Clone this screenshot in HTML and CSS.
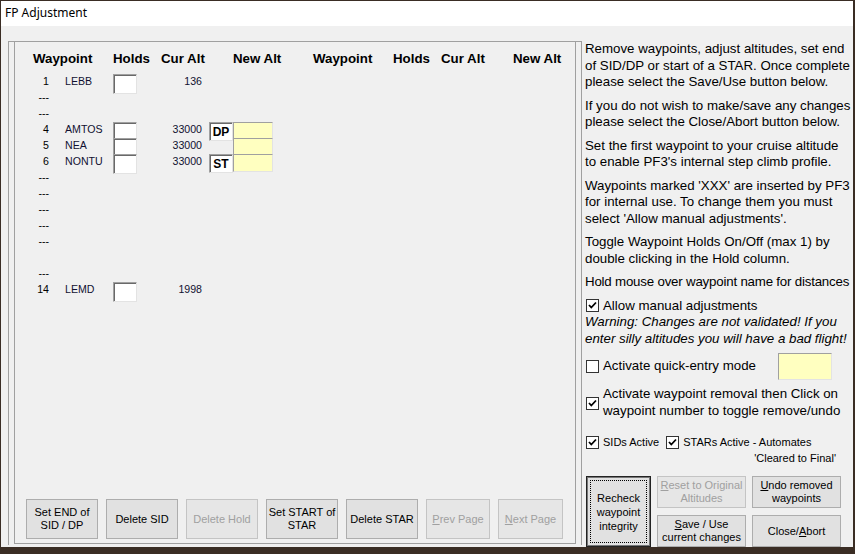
FILE: index.html
```html
<!DOCTYPE html>
<html lang="en">
<head>
    <meta charset="UTF-8">
    <title>FP Adjustment</title>
    <link rel="stylesheet" href="styles.css">
</head>
<body>
    <div class="window">
        <div class="titlebar">FP Adjustment</div>
        <div class="client">
            <div class="frame">
                <div class="inner">
                    <div class="heads">
                        <span class="h-wp">Waypoint</span><span class="h-hold">Holds</span><span class="h-cur">Cur Alt</span><span class="h-new">New Alt</span>
                        <span class="h-wp">Waypoint</span><span class="h-hold">Holds</span><span class="h-cur">Cur Alt</span><span class="h-new">New Alt</span>
                    </div>
                    <div class="rows">
                        <div class="row"><span class="num">1</span><span class="name">LEBB</span><span class="box"></span><span class="cur">136</span></div>
                        <div class="row"><span class="num">---</span></div>
                        <div class="row"><span class="num">---</span></div>
                        <div class="row"><span class="num">4</span><span class="name">AMTOS</span><span class="box"></span><span class="cur">33000</span><span class="newalt"><span class="tag">DP</span><span class="yel"></span></span></div>
                        <div class="row"><span class="num">5</span><span class="name">NEA</span><span class="box"></span><span class="cur">33000</span><span class="newalt"><span class="tag blank"></span><span class="yel"></span></span></div>
                        <div class="row"><span class="num">6</span><span class="name">NONTU</span><span class="box"></span><span class="cur">33000</span><span class="newalt"><span class="tag">ST</span><span class="yel"></span></span></div>
                        <div class="row"><span class="num">---</span></div>
                        <div class="row"><span class="num">---</span></div>
                        <div class="row"><span class="num">---</span></div>
                        <div class="row"><span class="num">---</span></div>
                        <div class="row"><span class="num">---</span></div>
                        <div class="row"><span class="num"></span></div>
                        <div class="row"><span class="num">---</span></div>
                        <div class="row"><span class="num">14</span><span class="name">LEMD</span><span class="box"></span><span class="cur">1998</span></div>
                    </div>
                    <div class="btnbar">
                        <div class="btn">Set END of<br>SID / DP</div>
                        <div class="btn">Delete SID</div>
                        <div class="btn off">Delete Hold</div>
                        <div class="btn">Set START of<br>STAR</div>
                        <div class="btn">Delete STAR</div>
                        <div class="btn off narrow"><span><u>P</u>rev Page</span></div>
                        <div class="btn off narrow2"><span><u>N</u>ext Page</span></div>
                    </div>
                </div>
            </div>

            <div class="side">
                <p>Remove waypoints, adjust altitudes, set end<br>of SID/DP or start of a STAR. Once complete<br>please select the Save/Use button below.</p>
                <p>If you do not wish to make/save any changes<br>please select the Close/Abort button below.</p>
                <p>Set the first waypoint to your cruise altitude<br>to enable PF3's internal step climb profile.</p>
                <p>Waypoints marked 'XXX' are inserted by PF3<br>for internal use. To change them you must<br>select 'Allow manual adjustments'.</p>
                <p>Toggle Waypoint Holds On/Off (max 1) by<br>double clicking in the Hold column.</p>
                <p class="tight">Hold mouse over waypoint name for distances</p>
                <div class="check">
                    <span class="cb on"><svg width="11" height="11" viewBox="0 0 11 11"><path d="M2 5 L4.3 7.5 L9 2.5" fill="none" stroke="#000" stroke-width="1.8"/></svg></span>
                    <span>Allow manual adjustments</span>
                </div>
                <div class="warn">Warning: Changes are not validated! If you<br>enter silly altitudes you will have a bad flight!</div>
                <div class="check quick">
                    <span class="cb"></span>
                    <span>Activate quick-entry mode</span>
                    <span class="qbox"></span>
                </div>
                <div class="check removal">
                    <span class="cb on"><svg width="11" height="11" viewBox="0 0 11 11"><path d="M2 5 L4.3 7.5 L9 2.5" fill="none" stroke="#000" stroke-width="1.8"/></svg></span>
                    <span>Activate waypoint removal then Click on<br>waypoint number to toggle remove/undo</span>
                </div>
                <div class="check small">
                    <span class="cb on"><svg width="11" height="11" viewBox="0 0 11 11"><path d="M2 5 L4.3 7.5 L9 2.5" fill="none" stroke="#000" stroke-width="1.8"/></svg></span>
                    <span>SIDs Active</span>
                    <span class="cb on second"><svg width="11" height="11" viewBox="0 0 11 11"><path d="M2 5 L4.3 7.5 L9 2.5" fill="none" stroke="#000" stroke-width="1.8"/></svg></span>
                    <span>STARs Active - Automates</span>
                </div>
                <div class="cleared">'Cleared to Final'</div>

                <div class="actions">
                    <div class="btn default"><span class="focus">Recheck<br>waypoint<br>integrity</span></div>
                    <div class="btn off"><span><u>R</u>eset to Original<br>Altitudes</span></div>
                    <div class="btn"><span><u>U</u>ndo removed<br>waypoints</span></div>
                    <div class="btn"><span><u>S</u>ave / Use<br>current changes</span></div>
                    <div class="btn">Close/<u>A</u>bort</div>
                </div>
            </div>
        </div>
    </div>
</body>
</html>
```

FILE: styles.css
```css
body {
    margin: 0;
    background: #3a2d24;
    font-family: "Liberation Sans", Arial, sans-serif;
}

.window {
    width: 852px;
    height: 546px;
    margin: 1px 0 0 1px;
    background: #f0f0f0;
}

.titlebar {
    height: 25px;
    line-height: 24px;
    padding-left: 4px;
    background: #fff;
    font-family: "Noto Sans", sans-serif;
    font-size: 12px;
    color: #000;
}

.client {
    display: flex;
    height: 521px;
}

/* left group with the waypoint table */
.frame {
    width: 572px;
    height: 503px;
    margin: 15px 0 0 7px;
    border: 1px solid #a0a0a0;
    border-bottom: none;
}

.inner {
    display: flex;
    flex-direction: column;
    height: 502px;
    margin: 0 5px 0 5px;
    padding: 8px 0 4px 11px;
    box-sizing: border-box;
    border-left: 1px solid #a0a0a0;
    border-right: 1px solid #a0a0a0;
    border-bottom: 1px solid #a0a0a0;
}

.heads {
    display: flex;
    padding-left: 7px;
    height: 16px;
    line-height: 17px;
    font-size: 13.3px;
    font-weight: bold;
    color: #000;
    white-space: nowrap;
}

.heads span {
    flex-shrink: 0;
}

.h-wp { width: 80px; }
.h-hold { width: 48px; }
.h-cur { width: 72px; }
.h-new { width: 80px; }

.rows {
    margin-top: 7px;
    padding-left: 7px;
    font-size: 10.6px;
    color: #101030;
}

.row {
    display: flex;
    align-items: flex-start;
    height: 16px;
    line-height: 16px;
}

.num {
    width: 16px;
    text-align: right;
    color: #000;
}

.name {
    width: 48px;
    margin-left: 16px;
}

.box {
    width: 24px;
    height: 20px;
    margin-top: 1px;
    box-sizing: border-box;
    background: #fff;
    border: 1px solid;
    border-color: #a0a0a0 #e3e3e3 #e3e3e3 #a0a0a0;
    box-shadow: inset 1px 1px #696969;
}

.cur {
    width: 65px;
    text-align: right;
}

.newalt {
    display: flex;
    margin-left: 7px;
    margin-top: 1px;
}

.tag {
    width: 24px;
    height: 19px;
    box-sizing: border-box;
    padding-top: 1px;
    background: #fff;
    border: 1px solid;
    border-color: #a0a0a0 #e3e3e3 #e3e3e3 #a0a0a0;
    box-shadow: inset 1px 1px #696969;
    font-size: 12px;
    font-weight: bold;
    line-height: 16px;
    text-align: center;
    color: #000;
}

.tag.blank {
    background: none;
    border: none;
    box-shadow: none;
}

.yel {
    width: 40px;
    height: 18px;
    box-sizing: border-box;
    background: #ffffc0;
    border: 1px solid;
    border-color: #a0a0a0 #e3e3e3 #e3e3e3 #a0a0a0;
}

.btnbar {
    display: flex;
    gap: 8px;
    margin-top: auto;
}

.btnbar .btn {
    width: 72px;
    height: 40px;
}

.btnbar .narrow { width: 64px; }
.btnbar .narrow2 { width: 65px; }

.btn {
    display: flex;
    align-items: center;
    justify-content: center;
    box-sizing: border-box;
    background: #e1e1e1;
    border: 1px solid #adadad;
    font-size: 11px;
    line-height: 13px;
    text-align: center;
    color: #000;
    white-space: nowrap;
}

.btn.off {
    background: #e6e6e6;
    border-color: #c4c4c4;
    color: #a0a0a0;
}

/* right column */
.side {
    width: 268px;
    margin: 15px 0 0 3px;
    font-size: 13.3px;
    line-height: 16.5px;
    color: #000;
}

.side p {
    margin: 0 0 7px;
    white-space: nowrap;
}

.side p.tight {
    letter-spacing: -0.2px;
}

.check {
    display: flex;
    align-items: center;
    gap: 4px;
    white-space: nowrap;
}

.cb {
    display: flex;
    align-items: center;
    justify-content: center;
    flex-shrink: 0;
    width: 13px;
    height: 13px;
    margin-left: 1px;
    box-sizing: border-box;
    background: #fff;
    border: 1px solid #333;
}

.warn {
    font-style: italic;
    white-space: nowrap;
}

.quick {
    height: 27px;
    margin-top: 6px;
    padding-right: 21px;
}

.qbox {
    width: 54px;
    height: 27px;
    margin-left: auto;
    box-sizing: border-box;
    background: #ffffc0;
    border: 1px solid;
    border-color: #a0a0a0 #e3e3e3 #e3e3e3 #a0a0a0;
}

.removal {
    margin-top: 6px;
}

.removal .cb {
    margin-top: 2px;
}

.small {
    margin-top: 15px;
    font-size: 11px;
    line-height: 16px;
}

.small .second {
    margin-left: 3px;
}

.cleared {
    padding-right: 17px;
    font-size: 11px;
    line-height: 16px;
    text-align: right;
}

.actions {
    display: grid;
    grid-template-columns: 65px 89px 89px;
    grid-template-rows: 32px 32px;
    gap: 7px 6px;
    margin: 10px 0 0 1px;
}

.actions .default {
    grid-row: 1 / 3;
    border: 1px solid #222;
    box-shadow: inset 0 0 0 1px #777;
    padding: 3px;
}

.focus {
    display: flex;
    align-items: center;
    justify-content: center;
    width: 100%;
    height: 100%;
    box-sizing: border-box;
    border: 1px dotted #000;
    line-height: 14px;
}
```
